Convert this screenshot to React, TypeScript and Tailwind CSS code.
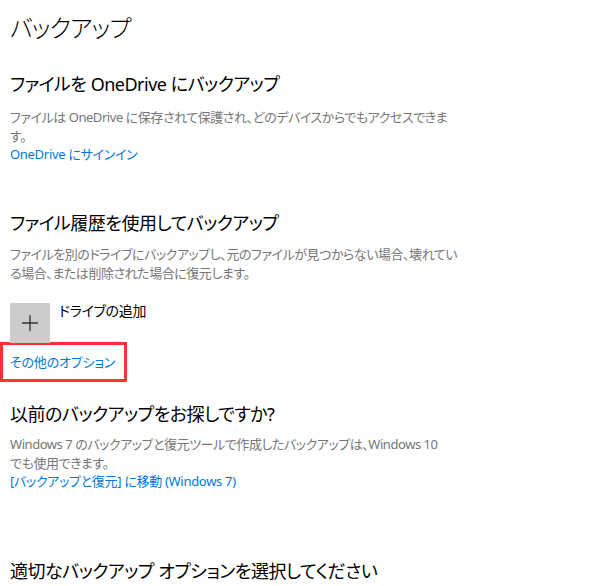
import React from 'react';

const font = "font-['Noto_Sans','Noto_Sans_CJK_JP',sans-serif] [font-feature-settings:'palt']";

const Heading = ({ children, className = '' }: { children: React.ReactNode; className?: string }) => (
  <h2 className={`text-[18px] leading-[26px] tracking-[-0.5px] text-black ${className}`}>{children}</h2>
);

const Body = ({ children, className = '' }: { children: React.ReactNode; className?: string }) => (
  <p className={`text-[13px] leading-[19px] tracking-[-0.45px] text-[#767676] ${className}`}>{children}</p>
);

const Link = ({ children, className = '' }: { children: React.ReactNode; className?: string }) => (
  <a className={`block text-[13px] leading-[19px] tracking-[-0.3px] text-[#0078d7] ${className}`}>{children}</a>
);

export default function App() {
  return (
    <div className={`${font} w-[599px] h-[586px] overflow-hidden bg-white`}>
      <div className="w-[458px] pl-[10px]">
        <h1 className="pt-[11px] text-[24px] leading-[34px] tracking-[-1px] font-light text-black">バックアップ</h1>

        <Heading className="mt-[26px]">ファイルを OneDrive にバックアップ</Heading>
        <Body className="mt-[11px]">ファイルは OneDrive に保存されて保護され、どのデバイスからでもアクセスできます。</Body>
        <Link className="-mt-[1px]">OneDrive にサインイン</Link>

        <Heading className="mt-[46px]">ファイル履歴を使用してバックアップ</Heading>
        <Body className="mt-[9px]">ファイルを別のドライブにバックアップし、元のファイルが見つからない場合、壊れている場合、または削除された場合に復元します。</Body>

        <div className="mt-[20px] flex items-start gap-[9px]">
          <div className="flex h-[40px] w-[40px] items-center justify-center bg-[#cccccc]">
            <svg width="18" height="18" viewBox="0 0 18 18">
              <path d="M9 1v16M1 9h16" stroke="#333" strokeWidth="1.3" />
            </svg>
          </div>
          <span className="-mt-[2px] text-[14px] leading-[19px] tracking-[-0.3px] text-black">ドライブの追加</span>
        </div>
      </div>

      <div className="mt-[-1px] w-[127px] border-[3px] border-[#ff3333] pl-[7px] pt-[9px] pb-[8px]">
        <span className="block whitespace-nowrap text-[13px] leading-[17px] tracking-[-0.2px] text-[#0078d7]">その他のオプション</span>
      </div>

      <div className="w-[458px] pl-[10px]">
        <Heading className="mt-[19px]">以前のバックアップをお探しですか?</Heading>
        <Body className="mt-[8px]">
          Windows 7 のバックアップと復元ツールで作成したバックアップは、Windows 10
          <br />
          でも使用できます。
        </Body>
        <Link className="-mt-[1px]">[バックアップと復元] に移動 (Windows 7)</Link>

        <Heading className="mt-[67px]">適切なバックアップ オプションを選択してください</Heading>
      </div>
    </div>
  );
}
